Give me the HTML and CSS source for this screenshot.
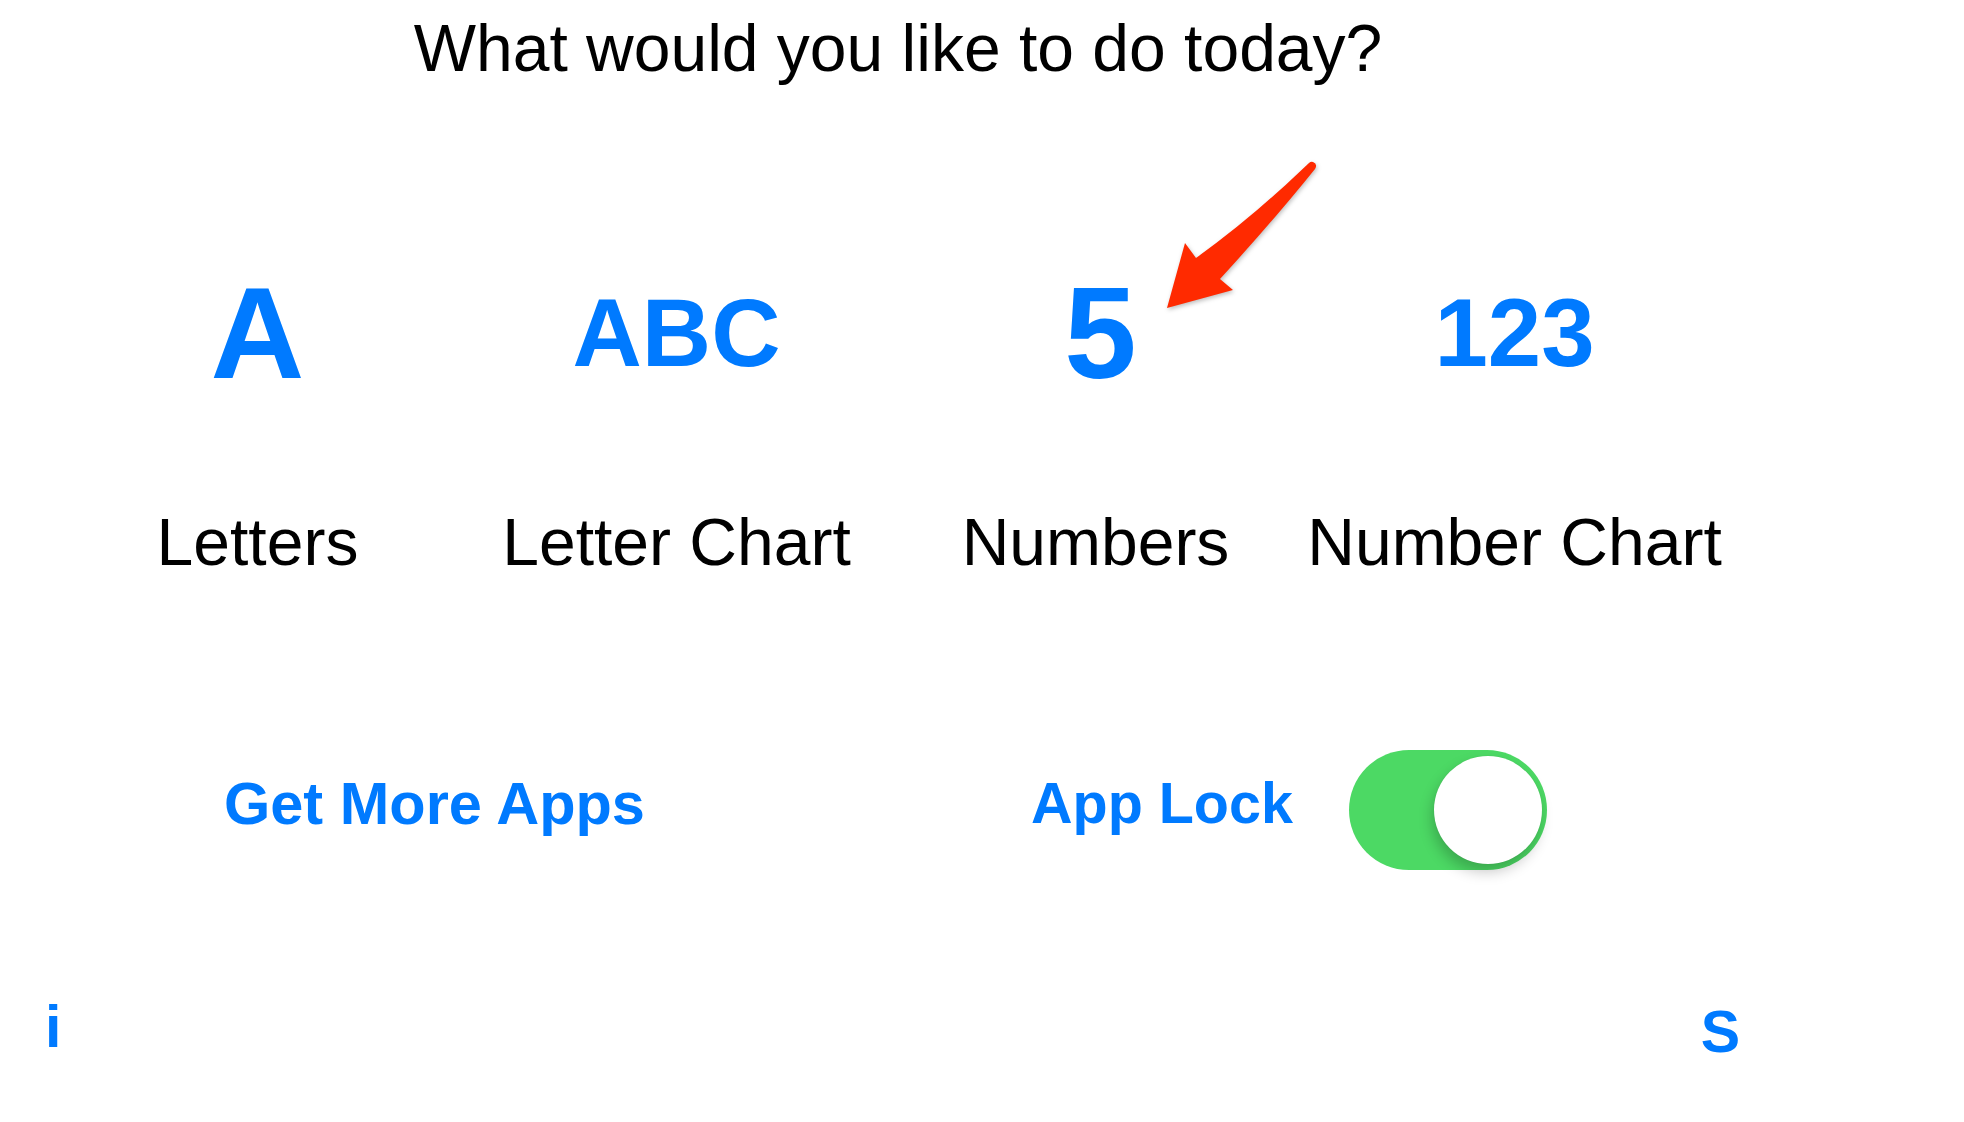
FILE: index.html
```html
<!DOCTYPE html>
<html lang="en">
<head>
<meta charset="utf-8">
<title>What would you like to do today?</title>
<link rel="stylesheet" href="styles.css">
</head>
<body>
<div class="screen">
  <h1 class="title">What would you like to do today?</h1>

  <div class="modes">
    <div class="mode">
      <div class="glyph big">A</div>
      <div class="label">Letters</div>
    </div>
    <div class="mode">
      <div class="glyph small">ABC</div>
      <div class="label">Letter Chart</div>
    </div>
    <div class="mode">
      <div class="glyph big shift">5</div>
      <div class="label">Numbers</div>
    </div>
    <div class="mode">
      <div class="glyph small">123</div>
      <div class="label">Number Chart</div>
    </div>
  </div>

  <div class="actions">
    <div class="more">Get More Apps</div>
    <div class="lock">
      <span class="lock-label">App Lock</span>
      <span class="switch"><span class="knob"></span></span>
    </div>
  </div>

  <div class="footer">
    <span class="info">i</span>
    <span class="settings">S</span>
  </div>

  <svg class="arrow" width="190" height="170" viewBox="0 0 190 170" aria-hidden="true">
    <path d="M159 13 Q102 68 46 108 L35 93 L17 158 L83 140 L70 129 Q124 70 165 19 Q168 14 163 12 Q161 11 159 13 Z" fill="#ff2a00"/>
  </svg>
</div>
</body>
</html>
```

FILE: styles.css
```css
html, body {
  margin: 0;
  padding: 0;
  background: #ffffff;
}

body {
  font-family: "Liberation Sans", Arial, "Helvetica Neue", sans-serif;
  color: #000000;
}

.screen {
  position: relative;
  width: 1964px;
  height: 1122px;
  padding-top: 15px;
  box-sizing: border-box;
  overflow: hidden;
}

.title {
  width: 1796px;
  margin: 0;
  font-size: 66px;
  font-weight: normal;
  line-height: 1;
  text-align: center;
  white-space: nowrap;
}

.modes {
  display: grid;
  grid-template-columns: repeat(4, 419px);
  margin-top: 182px;
  margin-left: 48px;
}

.mode {
  display: flex;
  flex-direction: column;
  align-items: center;
}

.glyph {
  height: 140px;
  display: flex;
  align-items: center;
  color: #007aff;
  font-weight: bold;
  line-height: 1;
}

.glyph.big {
  font-size: 130px;
}

.glyph.small {
  font-size: 96px;
}

.glyph.shift {
  padding-left: 10px;
}

.label {
  margin-top: 106px;
  font-size: 66px;
  line-height: 1;
  white-space: nowrap;
}

.actions {
  display: flex;
  align-items: flex-start;
  margin-top: 175px;
  padding-left: 224px;
  height: 120px;
}

.more,
.lock-label {
  color: #007aff;
  font-weight: bold;
  line-height: 1;
  white-space: nowrap;
}

.more {
  width: 807px;
  margin-top: 24px;
  font-size: 59.5px;
}

.lock {
  display: flex;
  align-items: flex-start;
  gap: 56px;
}

.lock-label {
  margin-top: 25px;
  font-size: 57.5px;
}

.switch {
  display: flex;
  justify-content: flex-end;
  align-items: center;
  width: 198px;
  height: 120px;
  padding: 0 5px;
  box-sizing: border-box;
  border-radius: 60px;
  background: #4cd964;
}

.knob {
  width: 108px;
  height: 108px;
  border-radius: 50%;
  background: #ffffff;
  box-shadow: -2px 8px 14px rgba(0, 0, 0, 0.22), 0 0 1px rgba(0, 0, 0, 0.12);
}

.footer {
  display: flex;
  justify-content: space-between;
  align-items: flex-start;
  width: 1740px;
  margin-top: 128px;
  padding-left: 45px;
  box-sizing: border-box;
  color: #007aff;
  font-size: 59px;
  font-weight: bold;
  line-height: 1;
}

.settings {
  margin-top: 5px;
}

.arrow {
  position: absolute;
  left: 1150px;
  top: 150px;
  filter: drop-shadow(1px 2px 2px rgba(0, 0, 0, 0.25));
}
```
